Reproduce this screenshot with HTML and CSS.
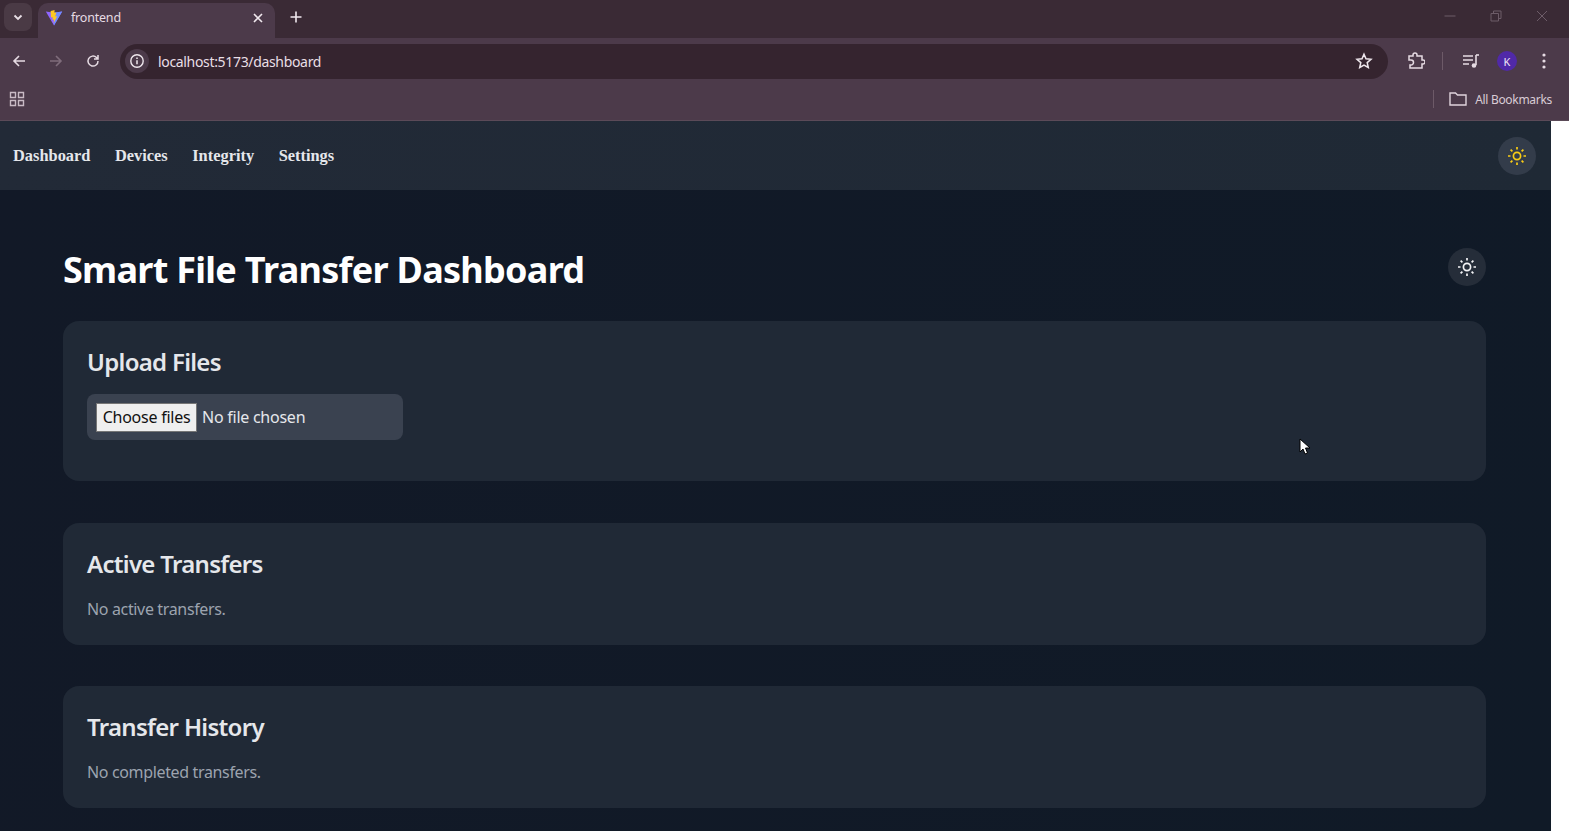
FILE: index.html
```html
<!DOCTYPE html>
<html lang="en">
<head>
  <meta charset="UTF-8" />
  <title>frontend</title>
  <link rel="stylesheet" href="styles.css">
</head>
<body>
  <div class="browser">
    <div class="tab-strip">
      <div class="tab-search">
        <svg width="12" height="12" viewBox="0 0 12 12"><path d="M2.500 4.500 6 8l3.500-3.500" fill="none" stroke="#e8dfe6" stroke-width="1.800"/></svg>
      </div>
      <div class="tab">
        <svg class="favicon" width="18" height="18" viewBox="0 0 18 18">
          <path d="M.8 2.400 9 16.600 17.200 2.400 9 3.800Z" fill="#8f66ff"/>
          <path d="M9 3.800 17.200 2.400 9 16.600Z" fill="#6f8cff"/>
          <path d="M9.600 1 5.600 2 6 8.600 7.800 8.200 7.400 10.800 9 10.400 8.600 14 12.200 7.200 10.200 7.600 11.400 3.400 9.400 3.800Z" fill="#ffc91f"/>
        </svg>
        <span class="tab-title">frontend</span>
        <svg class="tab-close" width="12" height="12" viewBox="0 0 12 12"><path d="M2 2l8 8M10 2l-8 8" stroke="#f1e9ef" stroke-width="1.600"/></svg>
      </div>
      <svg class="new-tab" width="14" height="14" viewBox="0 0 14 14"><path d="M7 1.500v11M1.500 7h11" stroke="#f1e9ef" stroke-width="1.600"/></svg>
      <div class="window-controls">
        <svg width="12" height="12" viewBox="0 0 12 12"><path d="M.5 6h11" stroke="#6d5c68"/></svg>
        <svg width="12" height="12" viewBox="0 0 12 12"><path d="M1 3.500h7.500V11H1zM3.500 3.500V1H11v7.500H8.500" fill="none" stroke="#6d5c68"/></svg>
        <svg width="12" height="12" viewBox="0 0 12 12"><path d="M1 1l10 10M11 1 1 11" stroke="#6d5c68"/></svg>
      </div>
    </div>

    <div class="toolbar">
      <svg class="nav-icon" width="16" height="16" viewBox="0 0 16 16"><path d="M14 8H3M8 3 3 8l5 5" fill="none" stroke="#e6dbe3" stroke-width="1.600"/></svg>
      <svg class="nav-icon" width="16" height="16" viewBox="0 0 16 16"><path d="M2 8h11M8 3l5 5-5 5" fill="none" stroke="#7f6c7b" stroke-width="1.600"/></svg>
      <svg class="nav-icon" width="16" height="16" viewBox="0 0 16 16"><path d="M13 8a5 5 0 1 1-1.500-3.500L13 6M13 2v4H9" fill="none" stroke="#e6dbe3" stroke-width="1.500"/></svg>
      <div class="address-bar">
        <div class="site-info">
          <svg width="16" height="16" viewBox="0 0 16 16"><circle cx="8" cy="8" r="6.200" fill="none" stroke="#efe7ed" stroke-width="1.400"/><path d="M8 7.200v4M8 4.600v1.500" stroke="#efe7ed" stroke-width="1.500"/></svg>
        </div>
        <span class="url">localhost:5173/dashboard</span>
        <svg class="star" width="18" height="18" viewBox="0 0 18 18"><path d="M9 2.200 11 6.800l5 .5-3.800 3.300 1.100 4.900L9 13l-4.300 2.500 1.100-4.900L2 7.300l5-.5Z" fill="none" stroke="#efe7ed" stroke-width="1.500"/></svg>
      </div>
      <svg class="ext-icon" width="18" height="18" viewBox="0 0 18 18"><path d="M2 4h4V3a2 2 0 0 1 4 0v1h5v4h1a2 2 0 0 1 0 4h-1v4H3v-3h1a2.200 2.200 0 0 0 0-5H2Z" fill="none" stroke="#e6dbe3" stroke-width="1.500"/></svg>
      <span class="divider"></span>
      <svg class="media-icon" width="18" height="18" viewBox="0 0 18 18"><path d="M1 4h10M1 8h10M1 12h6" stroke="#e6dbe3" stroke-width="1.600"/><path d="M14 3v10" stroke="#e6dbe3" stroke-width="1.600"/><path d="M14 3h3" stroke="#e6dbe3" stroke-width="1.600"/><circle cx="12" cy="13.500" r="2.300" fill="#e6dbe3"/></svg>
      <span class="avatar">K</span>
      <svg class="menu-icon" width="4" height="16" viewBox="0 0 4 16"><circle cx="2" cy="2" r="1.600" fill="#e6dbe3"/><circle cx="2" cy="8" r="1.600" fill="#e6dbe3"/><circle cx="2" cy="14" r="1.600" fill="#e6dbe3"/></svg>
    </div>

    <div class="bookmarks">
      <svg class="apps-icon" width="16" height="16" viewBox="0 0 16 16"><path d="M1.500 1.500h5v5h-5zM9.500 1.500h5v5h-5zM1.500 9.500h5v5h-5zM9.500 9.500h5v5h-5z" fill="none" stroke="#c9bac5" stroke-width="1.400"/></svg>
      <span class="divider bookmarks-divider"></span>
      <svg class="folder" width="18" height="16" viewBox="0 0 18 16"><path d="M1 2h5.500l2 2H17v10H1Z" fill="none" stroke="#e0d4dd" stroke-width="1.400"/></svg>
      <span class="all-bookmarks">All Bookmarks</span>
    </div>
  </div>

  <div class="viewport">
    <div class="app">
      <nav class="navbar">
        <div class="nav-links">
          <a href="#">Dashboard</a>
          <a href="#">Devices</a>
          <a href="#">Integrity</a>
          <a href="#">Settings</a>
        </div>
        <button class="theme-btn nav-theme">
          <svg width="20" height="20" viewBox="0 0 20 20"><circle cx="10" cy="10" r="3.600" fill="none" stroke="#facc15" stroke-width="1.700"/><path d="M10 1v2.500M10 16.500V19M1 10h2.500M16.500 10H19M3.600 3.600l1.800 1.800M14.600 14.600l1.800 1.800M3.600 16.400l1.800-1.800M14.600 5.400l1.800-1.800" stroke="#facc15" stroke-width="1.700"/></svg>
        </button>
      </nav>

      <main class="content">
        <div class="page-header">
          <h1>Smart File Transfer Dashboard</h1>
          <button class="theme-btn">
            <svg width="20" height="20" viewBox="0 0 20 20"><circle cx="10" cy="10" r="3.600" fill="none" stroke="#f3f4f6" stroke-width="1.700"/><path d="M10 1v2.500M10 16.500V19M1 10h2.500M16.500 10H19M3.600 3.600l1.800 1.800M14.600 14.600l1.800 1.800M3.600 16.400l1.800-1.800M14.600 5.400l1.800-1.800" stroke="#f3f4f6" stroke-width="1.700"/></svg>
          </button>
        </div>

        <section class="card upload-card">
          <h2>Upload Files</h2>
          <div class="file-box">
            <button class="file-btn">Choose files</button>
            <span class="file-name">No file chosen</span>
          </div>
        </section>

        <section class="card">
          <h2>Active Transfers</h2>
          <p>No active transfers.</p>
        </section>

        <section class="card">
          <h2>Transfer History</h2>
          <p>No completed transfers.</p>
        </section>
      </main>
    </div>
    <div class="scrollbar"></div>
  </div>

  <svg class="cursor" width="12" height="18" viewBox="0 0 12 18"><path d="M1 1v13l3-3 2 5 2.500-1-2-5h4.500Z" fill="#fff" stroke="#000"/></svg>
</body>
</html>
```

FILE: styles.css
```css
* {
  box-sizing: border-box;
}

html, body {
  height: 100%;
}

body {
  margin: 0;
  overflow: hidden;
  font-family: "Noto Sans", "Open Sans", sans-serif;
  background: #111827;
}

svg {
  display: block;
  flex-shrink: 0;
}

/* browser frame */
.browser {
  height: 121px;
  background: #4c3a4a;
  color: #e6dbe3;
  border-bottom: 1px solid #5b4a58;
}

.tab-strip {
  height: 38px;
  background: #3a2a35;
  display: flex;
  align-items: flex-end;
  position: relative;
  padding-left: 4px;
}

.tab-search {
  width: 28px;
  height: 28px;
  margin: 0 6px 7px 0;
  border-radius: 8px;
  background: #4a3a45;
  display: flex;
  align-items: center;
  justify-content: center;
}

.tab {
  width: 237px;
  height: 35px;
  background: #4c3a4a;
  border-radius: 10px 10px 0 0;
  display: flex;
  align-items: center;
  padding: 0 11px 6px 7px;
}

.favicon {
  margin-right: 8px;
}

.tab-title {
  flex: 1;
  font-size: 12.500px;
  letter-spacing: -0.200px;
}

.new-tab {
  margin: 0 0 14px 14px;
}

.window-controls {
  position: absolute;
  top: 10px;
  right: 21px;
  display: flex;
  gap: 34px;
}

.toolbar {
  height: 44px;
  display: flex;
  align-items: center;
  padding: 2px 17px 0 11px;
}

.nav-icon {
  margin-right: 21px;
}

.address-bar {
  width: 1268px;
  height: 35px;
  margin-left: -2px;
  border-radius: 18px;
  background: #35242f;
  display: flex;
  align-items: center;
  padding: 0 15px 0 5px;
}

.site-info {
  width: 24px;
  height: 24px;
  border-radius: 50%;
  background: #4c3a4a;
  display: flex;
  align-items: center;
  justify-content: center;
  margin-right: 9px;
}

.url {
  flex: 1;
  font-size: 14px;
  letter-spacing: -0.330px;
  color: #e9dfe6;
}

.ext-icon {
  margin-left: 19px;
}

.divider {
  width: 1px;
  height: 18px;
  background: #6d5a68;
  margin: 0 18px 0 17px;
}

.avatar {
  width: 20px;
  height: 20px;
  margin: 0 0 0 17px;
  border-radius: 50%;
  background: #5029a8;
  color: #eee6f5;
  font-size: 11px;
  display: flex;
  align-items: center;
  justify-content: center;
}

.media-icon {
  margin-left: 1px;
}

.menu-icon {
  margin-left: 25px;
}

.bookmarks {
  height: 38px;
  display: flex;
  align-items: center;
  padding: 0 17px 4px 9px;
}

.apps-icon {
  margin-right: auto;
}

.bookmarks-divider {
  margin: 0 15px 0 0;
}

.all-bookmarks {
  margin-left: 8px;
  font-size: 12px;
  letter-spacing: -0.300px;
  color: #d9ccd5;
}

/* page */
.viewport {
  height: 710px;
  display: flex;
}

.scrollbar {
  width: 18px;
  background: #fff;
}

.app {
  flex: 1;
  min-width: 0;
  background: linear-gradient(100deg, #121927, #101a27);
}

.navbar {
  height: 69px;
  background: linear-gradient(100deg, #222a37, #1f2935);
  display: flex;
  align-items: center;
  justify-content: space-between;
  padding: 0 15px 0 13px;
}

.nav-links {
  display: flex;
  gap: 24.500px;
}

.nav-links a {
  font-family: "Liberation Serif", serif;
  font-weight: 700;
  font-size: 16.400px;
  color: #e5e7eb;
  text-decoration: none;
}

.theme-btn {
  width: 38px;
  height: 38px;
  padding: 0;
  border: none;
  border-radius: 50%;
  background: #252d39;
  display: flex;
  align-items: center;
  justify-content: center;
}

.nav-theme {
  background: #333c4a;
}

.content {
  padding: 58px 65px 0 63px;
}

.page-header {
  display: flex;
  align-items: flex-start;
  justify-content: space-between;
  margin-bottom: 29px;
}

.page-header h1 {
  margin: 0;
  font-size: 36px;
  line-height: 44px;
  letter-spacing: -0.720px;
  font-weight: 700;
  color: #fff;
}

.card {
  background: #202936;
  border-radius: 16px;
  padding: 25px 24px 24px;
  margin-bottom: 41.500px;
}

.upload-card {
  padding-bottom: 41px;
}

.card h2 {
  margin: 0;
  font-size: 24px;
  line-height: 32px;
  letter-spacing: -0.700px;
  font-weight: 600;
  color: #e5e7eb;
}

.card p {
  margin: 17px 0 0;
  font-size: 16px;
  line-height: 24px;
  letter-spacing: -0.350px;
  color: #9ca3af;
}

.file-box {
  width: 316px;
  height: 46px;
  margin-top: 16px;
  border-radius: 8px;
  background: #3a4250;
  display: flex;
  align-items: center;
  padding-left: 9px;
}

.file-btn {
  width: 101px;
  height: 29px;
  padding: 0;
  border: 1px solid #767676;
  background: #efefef;
  color: #111;
  font-family: inherit;
  font-size: 16px;
  letter-spacing: -0.250px;
}

.file-name {
  margin-left: 5px;
  font-size: 16px;
  letter-spacing: -0.250px;
  color: #e5e7eb;
}

.cursor {
  position: absolute;
  left: 1299px;
  top: 438px;
}
```
